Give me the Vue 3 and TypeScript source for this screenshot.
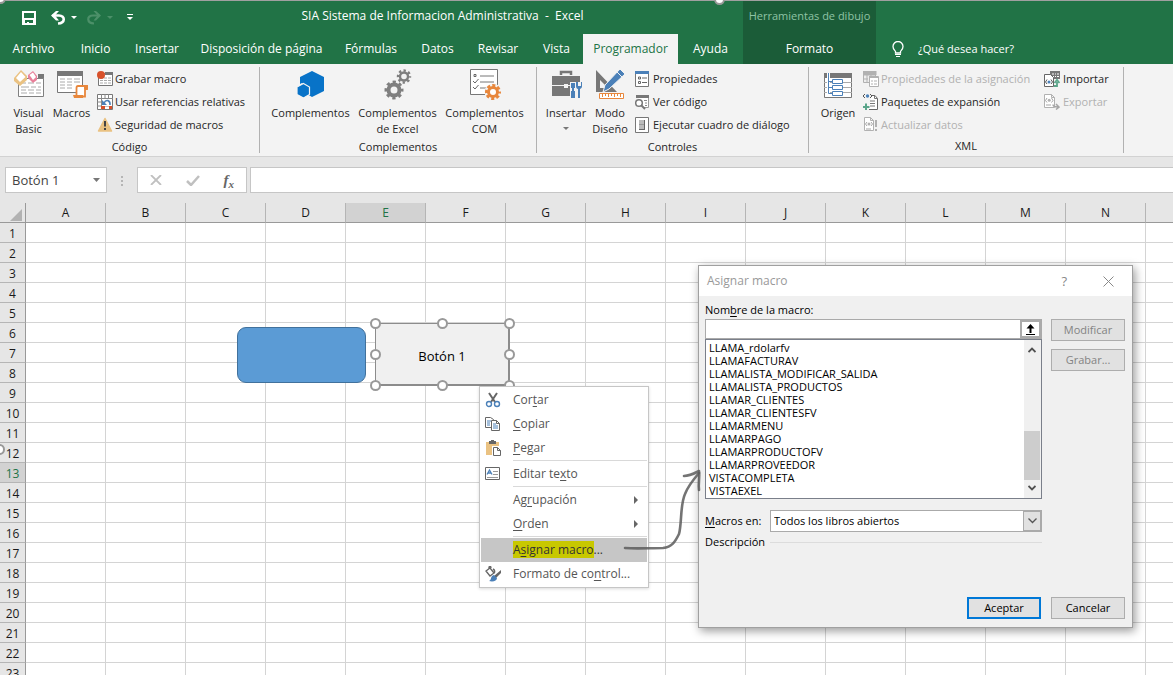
<script setup lang="ts">
import { ref } from 'vue'

interface RibbonTab {
  label: string
  kind?: 'active' | 'context'
}

const tabs: RibbonTab[] = [
  { label: 'Archivo' },
  { label: 'Inicio' },
  { label: 'Insertar' },
  { label: 'Disposición de página' },
  { label: 'Fórmulas' },
  { label: 'Datos' },
  { label: 'Revisar' },
  { label: 'Vista' },
  { label: 'Programador', kind: 'active' },
  { label: 'Ayuda' },
  { label: 'Formato', kind: 'context' },
]

const columns: string[] = ['A', 'B', 'C', 'D', 'E', 'F', 'G', 'H', 'I', 'J', 'K', 'L', 'M', 'N', '']
const rows: number[] = Array.from({ length: 23 }, (_, i) => i + 1)

const macros: string[] = [
  'LLAMA_rdolarfv',
  'LLAMAFACTURAV',
  'LLAMALISTA_MODIFICAR_SALIDA',
  'LLAMALISTA_PRODUCTOS',
  'LLAMAR_CLIENTES',
  'LLAMAR_CLIENTESFV',
  'LLAMARMENU',
  'LLAMARPAGO',
  'LLAMARPRODUCTOFV',
  'LLAMARPROVEEDOR',
  'VISTACOMPLETA',
  'VISTAEXEL',
]

const handles: string[] = ['nw', 'n', 'ne', 'w', 'e', 'sw', 's', 'se']
const nameBox = ref('Botón 1')
const formula = ref('')
const macroName = ref('')
const scope = ref('Todos los libros abiertos')
</script>

<template>
  <div class="app">
    <header class="top">
      <div class="titlebar">
        <div class="quick">
          <button class="plain" aria-label="Guardar">
            <svg width="14" height="14" viewBox="0 0 14 14"><path fill-rule="evenodd" d="M0 0h14v14H0zM2 2v5h10V2zM3 9v3h2v-1h2v1h4V9z" fill="#fff" /></svg>
          </button>
          <button class="plain undo" aria-label="Deshacer">
            <svg width="26" height="14" viewBox="0 0 26 14"><path d="M1.500 4.500H8c6.500 0 6.500 7.500-1 8" fill="none" stroke="#fff" stroke-width="2.600" /><path d="M5 0h3L4 4.500 8 9.500H5L0 4.500z" fill="#fff" /><path d="M20 5h6l-3 3z" fill="#fff" /></svg>
          </button>
          <button class="plain redo" aria-label="Rehacer">
            <svg width="26" height="14" viewBox="0 0 26 14"><path d="M12.500 4.500H6c-6.500 0-6.500 7.500 1 8" fill="none" stroke="#4c9069" stroke-width="2.200" /><path d="M9 0H6.500l4 4.500-4 5H9l5-5z" fill="#4c9069" /><path d="M20 5h6l-3 3z" fill="#4c9069" /></svg>
          </button>
          <button class="plain more" aria-label="Personalizar">
            <svg width="6" height="7" viewBox="0 0 6 7"><path d="M0 0h6v1H0zM0 3h6L3 6z" fill="#fff" /></svg>
          </button>
        </div>
        <h1 class="doc-title">SIA Sistema de Informacion Administrativa&nbsp; -&nbsp; Excel</h1>
        <div class="context-title">Herramientas de dibujo</div>
      </div>
      <nav class="tabs">
        <button v-for="t in tabs" :key="t.label" class="tab" :class="t.kind">{{ t.label }}</button>
        <button class="tab tell">
          <svg width="12" height="17" viewBox="0 0 12 17"><path d="M3.500 12V10.500C2.500 9 1 8 1 5.500a5 5 0 0 1 10 0C11 8 9.500 9 8.500 10.500V12z" fill="none" stroke="#fff" stroke-width="1.300" /><path d="M3 13h6v1H3zM4 15h4v1H4z" fill="#fff" /></svg>
          <span>¿Qué desea hacer?</span>
        </button>
      </nav>
    </header>

    <section class="ribbon">
      <div class="group g-code">
        <div class="tools">
          <button class="big">
            <svg width="30" height="28" viewBox="0 0 30 28"><path d="M24 4h6v5h-6z" fill="#777" /><path d="M4.500 8.500h25v18h-25z" fill="#fff" stroke="#808080" /><path d="M7 13h5M14 13h6M22 13h5M7 17h8M17 17h5M24 17h3M7 20h5M14 20h6M22 20h5M7 23h6M15 23h5M22 23h5" stroke="#aaa" /><path d="M0 8L7 0l6 6v4l-7 6-6-5z" fill="#eac282" /><path d="M2 8l5-6 4.500 5L6 12z" fill="#fff" /><path d="M14 5l5-4 4 5v4l-4 3-5-5z" fill="#e8809a" /><path d="M15.500 5L19 2.500 22 7l-3 3z" fill="#fff" /></svg>
            <span>Visual<br>Basic</span>
          </button>
          <button class="big">
            <svg width="32" height="28" viewBox="0 0 32 28"><path d="M1.500 2.500h25v20h-25z" fill="#fff" stroke="#777" /><path d="M1 1h26v5H1z" fill="#777" /><path d="M4 9h5M11 9h5M18 9h6M4 12h5M11 12h5M18 12h6M4 15h5M11 15h5M4 18h5M11 18h5" stroke="#aaa" /><path d="M22 16h9v3h-2v7.500h-8.500V18c0-1 .5-2 1.500-2z" fill="#fff" stroke="#e8873c" stroke-width="1.800" /><path d="M28 15h4v4h-4zM17 25h10v3h-9z" fill="#e8873c" /></svg>
            <span>Macros</span>
          </button>
          <div class="small-col">
            <button class="small">
              <svg width="16" height="16" viewBox="0 0 16 16"><path d="M1.500 2.500h14v12h-14z" fill="#fff" stroke="#777" /><path d="M8 1h8v3H8z" fill="#777" /><path d="M3 7h3M7 7h3M11 7h3M3 9.500h3M7 9.500h3M11 9.500h3M3 12h3M7 12h3M11 12h3" stroke="#aaa" /><circle cx="4" cy="4" r="4" fill="#d8512b" /></svg>
              <span>Grabar macro</span>
            </button>
            <button class="small">
              <svg width="16" height="16" viewBox="0 0 16 16"><path d="M.5.5h15v15H.5z" fill="#fff" stroke="#777" /><path d="M4.500 0v16M11.500 0v4M8 0v4M0 4.500h16M0 8h4M0 12h16" stroke="#888" fill="none" /><path d="M5 5h10v7H5z" fill="#fff" /><path d="M5 6v5h5z" fill="#4b80b8" /><path d="M7 9c2-4 6.500-3 6 2" stroke="#4b80b8" stroke-width="1.600" fill="none" /><path d="M4 12h4v3H4zM12 12h3v3h-3z" fill="#d8512b" /></svg>
              <span>Usar referencias relativas</span>
            </button>
            <button class="small">
              <svg width="16" height="16" viewBox="0 0 16 16"><path d="M8 1.500L14.500 14h-13z" fill="#eac282" stroke="#eac282" stroke-width="1.500" stroke-linejoin="round" /><path d="M7 4h2v5.500H7zM7 11h2v2H7z" fill="#444" /></svg>
              <span>Seguridad de macros</span>
            </button>
          </div>
        </div>
        <div class="group-name">Código</div>
      </div>

      <div class="group g-addins">
        <div class="tools">
          <button class="big">
            <svg width="28" height="30" viewBox="0 0 28 30"><path d="M15 2l12 6v14l-12 6-5-3v-8l-5-3-2 1V8z" fill="#0873c8" /><path d="M6.500 14.500l6 3.500v7.500L6.500 29 0 25.500V18z" fill="#0873c8" stroke="#f3f3f3" stroke-width="1.200" /></svg>
            <span>Complementos</span>
          </button>
          <button class="big">
            <svg width="28" height="30" viewBox="0 0 28 30"><g fill="none" stroke="#7f7f7f"><circle cx="10" cy="21" r="5.500" stroke-width="4" /><circle cx="10" cy="21" r="8" stroke-width="3" stroke-dasharray="3.200 3.083" stroke-dashoffset="1.600" /><circle cx="20" cy="7.500" r="4" stroke-width="2.400" /><circle cx="20" cy="7.500" r="6" stroke-width="2.400" stroke-dasharray="2.356 2.356" stroke-dashoffset="1.200" /></g></svg>
            <span>Complementos<br>de Excel</span>
          </button>
          <button class="big">
            <svg width="32" height="32" viewBox="0 0 32 32"><path d="M1.500 1.500h27v25h-27z" fill="#fff" stroke="#777" /><path d="M11 8h14M11 14h14M11 20h6" stroke="#777" /><path d="M5 6.500h2v2H5zM4 13l2 2 3.500-4M4 19l2 2 3.500-4" fill="none" stroke="#666" /><circle cx="24" cy="24" r="8.500" fill="#f3f3f3" /><circle cx="24" cy="24" r="4.500" fill="#fff" stroke="#e8873c" stroke-width="3" /><circle cx="24" cy="24" r="6.500" fill="none" stroke="#e8873c" stroke-width="3" stroke-dasharray="3 2.105" stroke-dashoffset="1.500" /></svg>
            <span>Complementos<br>COM</span>
          </button>
        </div>
        <div class="group-name">Complementos</div>
      </div>

      <div class="group g-controls">
        <div class="tools">
          <button class="big">
            <svg width="32" height="32" viewBox="0 0 32 32"><path d="M11 7V4h10v3" fill="none" stroke="#777" stroke-width="2.500" /><path d="M2 8h28v9H2zM2 18h28v10H2z" fill="#777" /><path d="M14 16h4v4h-4z" fill="#f3f3f3" /><path d="M20 14h11v17H20z" fill="#f3f3f3" /><path d="M21 15h4v5h-1v3h1v7h-4v-7h1v-3h-1zM26 14v4c0 2 1 3 2 3v9h2v-9c2-1 2-2 2-3v-4h-1v4h-3v-4z" fill="#4b80b8" /></svg>
            <span>Insertar</span>
            <svg class="drop" width="6" height="4" viewBox="0 0 6 4"><path d="M0 0h6L3 3z" fill="#777" /></svg>
          </button>
          <button class="big">
            <svg width="32" height="32" viewBox="0 0 32 32"><path fill-rule="evenodd" d="M2 2v22h21zM6 12v8h8z" fill="#777" /><path d="M26 1l5 5-16 15-6 3 2-7z" fill="#4b80b8" stroke="#f3f3f3" /><path d="M23 4l5 5" stroke="#f3f3f3" /><path d="M5.500 25.500h24v5h-24z" fill="#fff" stroke="#e8873c" /><path d="M8.500 26v3M11.500 26v2M14.500 26v3M17.500 26v2M20.500 26v3M23.500 26v2M26.500 26v3" stroke="#e8873c" /></svg>
            <span>Modo<br>Diseño</span>
          </button>
          <div class="small-col">
            <button class="small">
              <svg width="16" height="16" viewBox="0 0 16 16"><path d="M.5.5h13v15H.5z" fill="#fff" stroke="#777" /><path d="M0 0h14v3H0z" fill="#4b80b8" /><path d="M3.500 6h2v2h-2zM3.500 10.500h2v2h-2z" fill="#fff" stroke="#666" /><path d="M7 7h5M7 11.500h5" stroke="#666" /></svg>
              <span>Propiedades</span>
            </button>
            <button class="small">
              <svg width="16" height="16" viewBox="0 0 16 16"><path d="M2.500 1.500h11v12H8" fill="#fff" stroke="#999" /><path d="M1 1h13v3H1z" fill="#777" /><path d="M9 6.500h3M10 9h2M10 11.500h2" stroke="#888" /><circle cx="4" cy="9" r="3.300" fill="#fff" stroke="#777" stroke-width="1.500" /><path d="M6 11l4 4" stroke="#777" stroke-width="2" /></svg>
              <span>Ver código</span>
            </button>
            <button class="small">
              <svg width="16" height="16" viewBox="0 0 16 16"><path d="M.5.5h13v15H.5z" fill="#fff" stroke="#777" /><path d="M4 3h6v10H4z" fill="#999" /><path d="M4 3h5v4H4zM4 8h5v4H4z" fill="#bbb" /><path d="M9 3h1v10H4v-1h5z" fill="#666" /></svg>
              <span>Ejecutar cuadro de diálogo</span>
            </button>
          </div>
        </div>
        <div class="group-name">Controles</div>
      </div>

      <div class="group g-xml">
        <div class="tools">
          <button class="big">
            <svg width="28" height="28" viewBox="0 0 28 28"><path d="M.5 3.500h27v24H.5z" fill="#fff" stroke="#777" /><path d="M0 3h28v5H0z" fill="#777" /><path d="M0 12.500h28M0 17.500h28M0 22.500h28" stroke="#aaa" /><path d="M3 3h3v21H3z" fill="#fff" /><path d="M4.500 3v20.500h4M4.500 11.500h4M4.500 17.500h4" fill="none" stroke="#4b80b8" /><path d="M8.500 9.500h10v4h-10zM8.500 15.500h10v4h-10zM8.500 21.500h10v4h-10z" fill="#fff" stroke="#4b80b8" /></svg>
            <span>Origen</span>
          </button>
          <div class="small-col">
            <button class="small" disabled>
              <svg width="16" height="16" viewBox="0 0 16 16"><path d="M.5 1.500h12v10H.5z" fill="#eee" stroke="#b1b1b1" /><path d="M0 0h13v4H0zM4 4v8M8 4v2M0 8h5" fill="#b1b1b1" stroke="#b1b1b1" /><path d="M6.500 5.500h9v10h-9z" fill="#fff" stroke="#b1b1b1" /><path d="M6 5h9v2H6z" fill="#b1b1b1" /><path d="M8 10h2M11 10h3M8 13h2M11 13h3" stroke="#b1b1b1" /></svg>
              <span>Propiedades de la asignación</span>
            </button>
            <button class="small">
              <svg width="16" height="16" viewBox="0 0 16 16"><path d="M8 1.500h4l2.500 3v11H6" fill="#fff" stroke="#666" /><path d="M11.500 1.500v3h3M7 7h5M7 9.500h5M7 12h5" stroke="#777" fill="none" /><path d="M2 0L0 2l2 2M7 0l2 2-2 2" stroke="#555" fill="none" /><circle cx="4.500" cy="2" r="1.700" fill="#4b80b8" /><path d="M2 9.500h2V12h2.500v2H4v2H2v-2H0v-2h2z" fill="#5aa58a" /></svg>
              <span>Paquetes de expansión</span>
            </button>
            <button class="small" disabled>
              <svg width="16" height="16" viewBox="0 0 16 16"><path d="M1.500.5h6l3 3v10h-9zM7.500.5v3h3" fill="#fff" stroke="#b1b1b1" /><path d="M4 5L2.500 7 4 9M8 5l1.500 2L8 9M3 12h5" stroke="#a5a5a5" fill="none" /><circle cx="6" cy="7" r="1.500" fill="#b1b1b1" /><path d="M12 3h2v7h-2zM12 12h2v2h-2z" fill="#b1b1b1" /></svg>
              <span>Actualizar datos</span>
            </button>
          </div>
          <div class="small-col">
            <button class="small">
              <svg width="16" height="16" viewBox="0 0 16 16"><path d="M6 0h10v8H6z" fill="#777" /><path d="M8 3h2M11 3h1M13 3h2M8 5.500h2M11 5.500h1M13 5.500h2" stroke="#fff" /><path d="M.5 3.500h6l3 3v9h-9z" fill="#fff" stroke="#666" /><path d="M3 8.500L1.500 11 3 13M7 8.500L8.500 11 7 13" stroke="#555" fill="none" /><circle cx="5" cy="11" r="1.500" fill="#4b80b8" /><path d="M10 15h3v-4M10.500 12L13 9l2.500 3" stroke="#5aa58a" stroke-width="1.800" fill="none" /></svg>
              <span>Importar</span>
            </button>
            <button class="small" disabled>
              <svg width="16" height="16" viewBox="0 0 16 16"><path d="M.5.5h7l3 3v10H.5zM7.500.5v3h3" fill="#fff" stroke="#b1b1b1" /><path d="M3 4L1.500 6.500 3 8.500M7.500 4L9 6.500 7.500 8.500M2 11h5" stroke="#a5a5a5" fill="none" /><circle cx="5.200" cy="6.300" r="1.500" fill="#b1b1b1" /><path d="M9 10.500c0 2 1 2.500 5 2.500M12 10l3 3-3 2.500" stroke="#a5a5a5" stroke-width="1.500" fill="none" /></svg>
              <span>Exportar</span>
            </button>
          </div>
        </div>
        <div class="group-name">XML</div>
      </div>
    </section>

    <div class="formula-row">
      <div class="name-box">
        <input v-model="nameBox" aria-label="Cuadro de nombres">
        <svg width="7" height="4" viewBox="0 0 7 4"><path d="M0 0h7L3.500 4z" fill="#777" /></svg>
      </div>
      <svg class="grip" width="2" height="10" viewBox="0 0 2 10"><path d="M0 0h2v2H0zM0 4h2v2H0zM0 8h2v2H0z" fill="#b5b5b5" /></svg>
      <div class="fx-box">
        <button class="plain" aria-label="Cancelar entrada"><svg width="12" height="10" viewBox="0 0 12 10"><path d="M1 0l10 10M11 0L1 10" stroke="#c0c0c0" stroke-width="1.800" /></svg></button>
        <button class="plain" aria-label="Introducir"><svg width="14" height="11" viewBox="0 0 14 11"><path d="M1 6l4 4 8-9" fill="none" stroke="#c0c0c0" stroke-width="2.500" /></svg></button>
        <button class="plain fx" aria-label="Insertar función"><i>f</i><i class="x">x</i></button>
      </div>
      <input v-model="formula" class="formula" aria-label="Barra de fórmulas">
    </div>

    <main class="sheet">
      <table>
        <thead>
          <tr>
            <th class="corner"><svg width="12" height="12" viewBox="0 0 12 12"><path d="M12 0v12H0z" fill="#b2b2b2" /></svg></th>
            <th v-for="c in columns" :key="c" scope="col" :class="{ sel: c === 'E' }">{{ c }}</th>
          </tr>
        </thead>
        <tbody>
          <tr v-for="r in rows" :key="r">
            <th scope="row" :class="{ sel: r === 13 }">{{ r }}</th>
            <td v-for="c in columns" :key="c"></td>
          </tr>
        </tbody>
      </table>
    </main>

    <i class="stray s-top"></i>
    <i class="stray s-left"></i>
    <i class="stray s-corner"></i>
    <div class="shape"></div>
    <div class="control">
      <button>Botón 1</button>
      <i v-for="h in handles" :key="h" class="handle" :class="h"></i>
    </div>

    <div class="menu" role="menu">
      <button role="menuitem">
        <svg width="16" height="16" viewBox="0 0 16 16"><path d="M4 1l6 9M12 1L6 10" stroke="#666" stroke-width="2" /><circle cx="4" cy="12" r="2.500" fill="none" stroke="#4b80b8" stroke-width="1.400" /><circle cx="12" cy="12" r="2.500" fill="none" stroke="#4b80b8" stroke-width="1.400" /></svg>
        <span>Cor<u>t</u>ar</span>
      </button>
      <button role="menuitem">
        <svg width="16" height="16" viewBox="0 0 16 16"><path d="M.5 1.500h5l3 2v8h-8z" fill="#fff" stroke="#666" /><path d="M2 5h4M2 7h3M2 9h3" stroke="#4b80b8" /><path d="M6.500 4.500h5l3 3v7h-8zM11.500 4.500v3h3" fill="#fff" stroke="#666" /><path d="M8 8h3M8 10h5M8 12h5" stroke="#4b80b8" /></svg>
        <span><u>C</u>opiar</span>
      </button>
      <button role="menuitem">
        <svg width="16" height="16" viewBox="0 0 16 16"><path d="M1 2h13v13H1z" fill="#eac282" /><path d="M4 1h2V0h3v1h2v3H4z" fill="#666" /><path d="M7 6h8v10H7z" fill="#fff" /><path d="M8.500 7.500h4l3 3v5h-7zM12.500 7.500v3h3" fill="#fff" stroke="#666" /></svg>
        <span><u>P</u>egar</span>
      </button>
      <hr>
      <button role="menuitem">
        <svg width="16" height="16" viewBox="0 0 16 16"><path d="M.5 1.500h14v12H.5z" fill="#fff" stroke="#666" /><path d="M2 8.500L4.500 4 7 8.500M3 7h3" stroke="#4b80b8" stroke-width="1.300" fill="none" /><path d="M8 5.500h5M8 8.500h5M2 11.500h11" stroke="#999" /></svg>
        <span>Editar te<u>x</u>to</span>
      </button>
      <hr>
      <button role="menuitem" class="sub"><span>Ag<u>r</u>upación</span><svg class="arrow" width="4" height="8" viewBox="0 0 4 8"><path d="M0 0l4 4-4 4z" fill="#666" /></svg></button>
      <button role="menuitem" class="sub"><span><u>O</u>rden</span><svg class="arrow" width="4" height="8" viewBox="0 0 4 8"><path d="M0 0l4 4-4 4z" fill="#666" /></svg></button>
      <hr>
      <button role="menuitem" class="sub current"><span><mark>A<u>s</u>ignar macro</mark>...</span></button>
      <button role="menuitem">
        <svg width="16" height="16" viewBox="0 0 16 16"><path d="M1 5l4-3 4 5-4 3zM4 4V1c1-1 2-1 2 1" fill="#fff" stroke="#666" stroke-width="1.300" /><path d="M8 3c2 1 2 3 1 4" stroke="#666" stroke-width="1.500" fill="none" /><path d="M16 4v3l-5 5-2-2z" fill="#666" /><path d="M9 9l3 3c0 3-4 4-8 3 3-1 1-5 5-6z" fill="#4b80b8" /></svg>
        <span>Formato de co<u>n</u>trol...</span>
      </button>
    </div>

    <section class="dialog" role="dialog" aria-labelledby="dlg-title">
      <div class="dlg-head">
        <h2 id="dlg-title">Asignar macro</h2>
        <button class="plain help" aria-label="Ayuda">?</button>
        <button class="plain" aria-label="Cerrar"><svg width="11" height="11" viewBox="0 0 11 11"><path d="M.5.5l10 10M10.500.5l-10 10" stroke="#888" /></svg></button>
      </div>
      <div class="dlg-body">
        <label class="name-label" for="macro-name">Nom<u>b</u>re de la macro:</label>
        <div class="picker">
          <div class="name-field">
            <input id="macro-name" v-model="macroName">
            <button aria-label="Contraer"><svg width="9" height="11" viewBox="0 0 9 11"><path d="M4.500 0l4 4.500H5.500V9h-2V4.500h-3zM0 10h9v1H0z" fill="#000" /></svg></button>
          </div>
          <div class="list">
            <ul role="listbox" aria-label="Macros">
              <li v-for="m in macros" :key="m" role="option">{{ m }}</li>
            </ul>
            <div class="scroll">
              <svg width="8" height="6" viewBox="0 0 8 6"><path d="M.5 5L4 1.500 7.500 5" fill="none" stroke="#505050" stroke-width="1.800" /></svg>
              <i class="thumb"></i>
              <svg width="8" height="6" viewBox="0 0 8 6"><path d="M.5 1L4 4.500 7.500 1" fill="none" stroke="#505050" stroke-width="1.800" /></svg>
            </div>
          </div>
        </div>
        <div class="side">
          <button class="btn" disabled>Modificar</button>
          <button class="btn" disabled>Grabar...</button>
        </div>
        <div class="options">
          <label for="macro-scope"><u>M</u>acros en:</label>
          <div class="select">
            <select id="macro-scope" v-model="scope"><option>Todos los libros abiertos</option></select>
            <span class="chev"><svg width="9" height="6" viewBox="0 0 9 6"><path d="M.5.5l4 4 4-4" fill="none" stroke="#555" stroke-width="1.300" /></svg></span>
          </div>
          <span>Descripción</span>
          <hr>
        </div>
        <div class="actions">
          <button class="btn primary">Aceptar</button>
          <button class="btn">Cancelar</button>
        </div>
      </div>
    </section>

    <svg class="pen" width="90" height="90" viewBox="0 0 90 90"><g fill="none" stroke="#5c5c5c" stroke-linecap="round" stroke-linejoin="round" stroke-opacity=".85"><path d="M5 84c12 1 24 0 38 0 9-1 12-6 16-14 3-11 1-29 6-40 3-8 8-14 14-21" stroke-width="2.600" /><path d="M64 12c6 0 11-3 15-5M79 7c1 7-1 13 0 19" stroke-width="2.600" /></g></svg>
  </div>
</template>

<style>
body { margin: 0; overflow: hidden; }
</style>

<style scoped>
.app {
  position: relative;
  height: 100vh;
  overflow: hidden;
  background: #e6e6e6;
  color: #262626;
  font: 12px/16px "Open Sans", "Noto Sans", sans-serif;
}
.app *, .app *::before { box-sizing: border-box; }
button, input, select { font: inherit; color: inherit; margin: 0; padding: 0; border: 0; background: none; border-radius: 0; outline: 0; }
svg { display: block; flex: none; }
u { text-underline-offset: 2px; }
.plain { display: flex; align-items: center; justify-content: center; }

.top { background: #217346; color: #fff; border-top: 1px solid #a0a0a0; }
.titlebar { display: grid; grid-template-columns: 142px 601px 133px 1fr; height: 33px; }
.quick { display: flex; align-items: center; padding-left: 22px; }
.undo { margin-left: 15px; }
.redo { margin-left: 10px; }
.more { margin-left: 14px; }
.doc-title { margin: 0; font-size: 12px; font-weight: 400; line-height: 30px; text-align: center; white-space: nowrap; }
.context-title { background: #1b5c38; color: #8fc3a5; font-size: 11px; line-height: 30px; text-align: center; white-space: nowrap; }
.tabs { display: grid; grid-template-columns: 67px 57px 66px 143px 76px 57px 64px 53px 95px 65px 133px 1fr; height: 30px; }
.tab { white-space: nowrap; text-align: center; color: #fff; display: flex; align-items: center; justify-content: center; }
.active { background: #f3f3f3; color: #217346; }
.context { background: #1b5c38; }
.tell { justify-content: flex-start; gap: 14px; padding-left: 16px; }
.tell span { font-size: 11px; }

.ribbon { display: flex; height: 93px; background: #f3f3f3; border-bottom: 1px solid #d2d2d2; padding-top: 3px; font-size: 11px; }
.group { display: flex; flex-direction: column; height: 86px; border-right: 1px solid #b1b1b1; }
.g-code { width: 260px; }
.g-addins { width: 277px; }
.g-controls { width: 272px; }
.g-xml { width: 315px; }
.tools { display: grid; height: 71px; }
.g-code .tools { grid-template-columns: 43px 43px 1fr; padding-left: 7px; }
.g-addins .tools { grid-template-columns: 87px 87px 87px; padding-left: 7px; }
.g-controls .tools { grid-template-columns: 44px 44px 1fr; padding-left: 7px; }
.g-xml .tools { grid-template-columns: 46px 181px 1fr; padding-left: 6px; }
.big { display: flex; flex-direction: column; align-items: center; justify-content: flex-start; white-space: nowrap; }
.big > svg:first-child { height: 34px; margin-bottom: 4px; }
.drop { margin-top: 6px; }
.small-col { display: flex; flex-direction: column; padding-left: 4px; }
.g-controls .small-col { padding-left: 3px; }
.g-xml .small-col { padding-left: 2px; }
.small { display: flex; align-items: center; gap: 2px; height: 23px; white-space: nowrap; }
.small-col + .small-col .small { gap: 3px; }
.small:disabled { color: #b1b1b1; }
.group-name { text-align: center; line-height: 20px; }

.formula-row { display: flex; height: 46px; padding-top: 10px; }
.name-box { display: flex; align-items: center; justify-content: space-between; width: 102px; height: 26px; margin-left: 5px; padding: 0 6px; background: #fff; border: 1px solid #c6c6c6; }
.name-box input { width: 70px; color: #444; font-size: 13px; }
.grip { margin: 9px 14px 0; }
.fx-box { display: flex; align-items: center; justify-content: space-around; width: 110px; height: 26px; background: #fff; border: 1px solid #c6c6c6; }
.fx { font: bold 15px/18px "Liberation Serif", serif; color: #666; }
.fx .x { font-size: 11px; line-height: 10px; align-self: flex-end; }
.formula { flex: 1; height: 26px; margin-left: 3px; padding: 0 6px; background: #fff; border: 1px solid #c6c6c6; border-right: 0; }

.sheet { overflow: hidden; }
table { width: 1226px; table-layout: fixed; border-collapse: separate; border-spacing: 0; background: #fff; }
th, td { height: 20px; padding: 0; border-right: 1px solid #d4d4d4; border-bottom: 1px solid #d4d4d4; }
th { width: 80px; background: #e6e6e6; color: #1a1a1a; font-weight: 400; line-height: 17px; text-align: center; border-right-color: #b5b5b5; border-bottom-color: #999; }
tbody th { padding-top: 2px; border-right-color: #999; border-bottom-color: #b5b5b5; }
.corner { width: 26px; border-right-color: #999; }
.corner svg { margin: 4px 0 0 10px; }
th.sel { background: #d2d2d2; color: #217346; }

.stray, .handle { position: absolute; width: 11px; height: 11px; border: 2px solid #999; border-radius: 50%; background: #fff; }
.s-top { left: 714px; top: -6px; }
.s-left { left: -6px; top: 444px; }
.s-corner { left: -5px; top: -7px; }
.shape { position: absolute; left: 237px; top: 327px; width: 129px; height: 56px; background: #5b9bd5; border: 1px solid #41719c; border-radius: 9px; }
.control { position: absolute; left: 375px; top: 323px; width: 135px; height: 63px; }
.control button { width: 100%; height: 100%; padding-top: 3px; background: #f0f0f0; border: 1px solid #8c8c8c; border-right-width: 2px; border-bottom-width: 2px; color: #000; font-size: 13px; }
.handle { margin: -5px; }
.nw, .w, .sw { left: 0; }
.n, .s { left: 67px; }
.ne, .e, .se { left: 134px; }
.nw, .n, .ne { top: 0; }
.w, .e { top: 31px; }
.sw, .s, .se { top: 62px; }

.menu { position: absolute; left: 479px; top: 386px; width: 170px; padding: 1px; background: #fff; border: 1px solid #c6c6c6; box-shadow: 0 1px 3px rgba(0, 0, 0, .15); color: #555; }
.menu button { display: flex; align-items: center; gap: 12px; width: 100%; height: 24px; padding-left: 4px; white-space: nowrap; }
.menu .sub { padding-left: 32px; }
.menu .arrow { margin-left: auto; margin-right: 9px; }
.menu hr { height: 1px; margin: 0 0 1px 32px; border: 0; background: #d9d9d9; }
.menu .current { background: #c6c6c6; color: #333; }
mark { background: #c8c800; color: inherit; }

.dialog { position: absolute; left: 698px; top: 265px; width: 435px; height: 363px; background: #f0f0f0; border: 1px solid #a0a0a0; box-shadow: 2px 3px 9px rgba(0, 0, 0, .4); color: #000; font-size: 11px; line-height: 14px; }
.dlg-head { display: flex; align-items: center; height: 30px; padding: 0 18px 0 8px; background: #fff; color: #888; }
.dlg-head h2 { flex: 1; margin: 0; font-size: 12px; font-weight: 400; color: #999; }
.help { margin-right: 36px; font-size: 13px; }
.dlg-body { display: grid; grid-template-columns: 337px 74px; column-gap: 9px; padding: 7px 7px 0 6px; }
.name-label { grid-column: 1 / 3; height: 16px; }
.name-field { display: flex; height: 20px; border: 1px solid #aaa; background: #fff; }
.name-field input { flex: 1; min-width: 0; padding: 0 3px; }
.name-field button { width: 21px; border: 2px solid #ababab; background: #fff; display: flex; align-items: center; justify-content: center; }
.list { display: flex; height: 160px; background: #fff; border: 1px solid #7a7f8a; }
.list ul { flex: 1; margin: 0; padding: 1px 3px; list-style: none; line-height: 13px; }
.scroll { width: 17px; background: #f0f0f0; display: flex; flex-direction: column; align-items: center; padding: 7px 1px 7px 0; }
.thumb { width: 16px; height: 49px; margin: 78px 0 5px; background: #cdcdcd; }
.btn { width: 74px; height: 22px; background: #e1e1e1; border: 1px solid #adadad; text-align: center; }
.btn:disabled { color: #838383; }
.primary { border: 2px solid #0078d7; }
.side { display: flex; flex-direction: column; gap: 8px; }
.options { display: grid; grid-template-columns: 65px 272px; align-items: center; row-gap: 3px; margin-top: 11px; white-space: nowrap; }
.select { display: flex; height: 22px; border: 1px solid #aaa; background: #fff; }
.select select { flex: 1; appearance: none; padding: 0 3px; }
.chev { width: 18px; background: #e1e1e1; border: 1px solid #aaa; display: flex; align-items: center; justify-content: center; pointer-events: none; }
.options hr { width: 100%; height: 1px; margin: 0; border: 0; background: #dcdcdc; }
.actions { grid-column: 1 / 3; display: flex; justify-content: flex-end; gap: 10px; margin-top: 48px; }

.pen { position: absolute; left: 620px; top: 464px; pointer-events: none; }
</style>
